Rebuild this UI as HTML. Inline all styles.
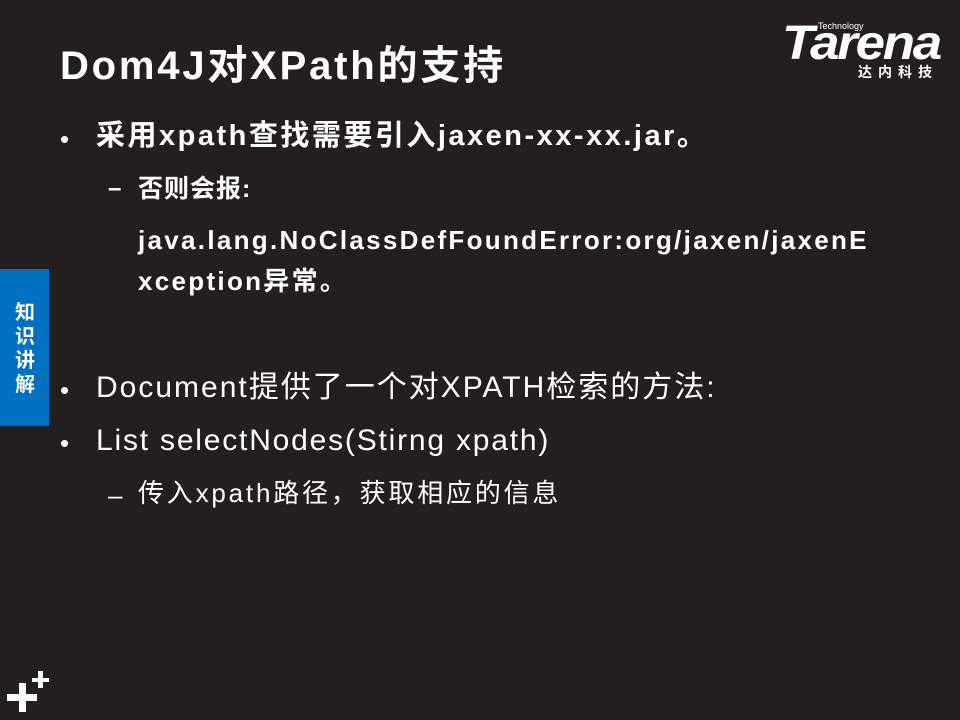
<!DOCTYPE html>
<html><head><meta charset="utf-8"><style>
html,body{margin:0;padding:0}
body{width:960px;height:720px;background:#231f20;position:relative;overflow:hidden;color:#fff;font-family:"Liberation Sans","Noto Sans CJK SC",sans-serif}
.t{position:absolute;white-space:nowrap;line-height:1}
.b{font-weight:bold}
.tab{position:absolute;left:0;top:269px;width:49px;height:157px;background:#0070c0}
.tab div{position:absolute;left:14px;top:30px;width:22px;font-size:20px;line-height:24px;font-weight:bold;text-align:center;font-family:"Noto Sans CJK SC",sans-serif}
.p{position:absolute;background:#fff}
</style></head><body>
<div class="t b" style="left:60px;top:46px;font-size:40px;letter-spacing:2.8px">Dom4J对XPath的支持</div>

<div class="t" style="left:782px;top:20px;font-size:48px;font-weight:bold;font-style:italic;letter-spacing:-2px;transform:scaleX(1.1);transform-origin:left">Tarena</div>
<div class="t" style="left:818px;top:22px;font-size:9px">Technology</div>
<div class="t b" style="left:858px;top:65px;font-size:14px;letter-spacing:6px;font-family:'Noto Sans CJK SC',sans-serif">达内科技</div>

<div class="t" style="left:60px;top:126px;font-size:26px">•</div>
<div class="t b" style="left:96px;top:122px;font-size:29px;letter-spacing:2.5px">采用xpath查找需要引入jaxen-xx-xx.jar。</div>
<div class="t b" style="left:108px;top:177px;font-size:24px">–</div>
<div class="t b" style="left:138px;top:177px;font-size:25px;letter-spacing:1px">否则会报:</div>
<div class="t b" style="left:138px;top:227px;font-size:26px;letter-spacing:2.3px">java.lang.NoClassDefFoundError:org/jaxen/jaxenE</div>
<div class="t b" style="left:138px;top:268px;font-size:26px;letter-spacing:2.3px">xception异常。</div>

<div class="t" style="left:60px;top:377px;font-size:26px">•</div>
<div class="t" style="left:96px;top:373px;font-size:30px;letter-spacing:2px">Document提供了一个对XPATH检索的方法:</div>
<div class="t" style="left:60px;top:430px;font-size:26px">•</div>
<div class="t" style="left:96px;top:426px;font-size:30px;letter-spacing:1.8px">List selectNodes(Stirng xpath)</div>
<div class="t" style="left:108px;top:482px;font-size:26px">–</div>
<div class="t" style="left:138px;top:480px;font-size:26px;letter-spacing:2.8px">传入xpath路径，获取相应的信息</div>

<div class="tab"><div>知识讲解</div></div>

<div class="p" style="left:7px;top:694px;width:30px;height:7px"></div>
<div class="p" style="left:19px;top:683px;width:7px;height:29px"></div>
<div class="p" style="left:32px;top:678px;width:17px;height:4px"></div>
<div class="p" style="left:38px;top:671px;width:5px;height:17px"></div>
</body></html>
